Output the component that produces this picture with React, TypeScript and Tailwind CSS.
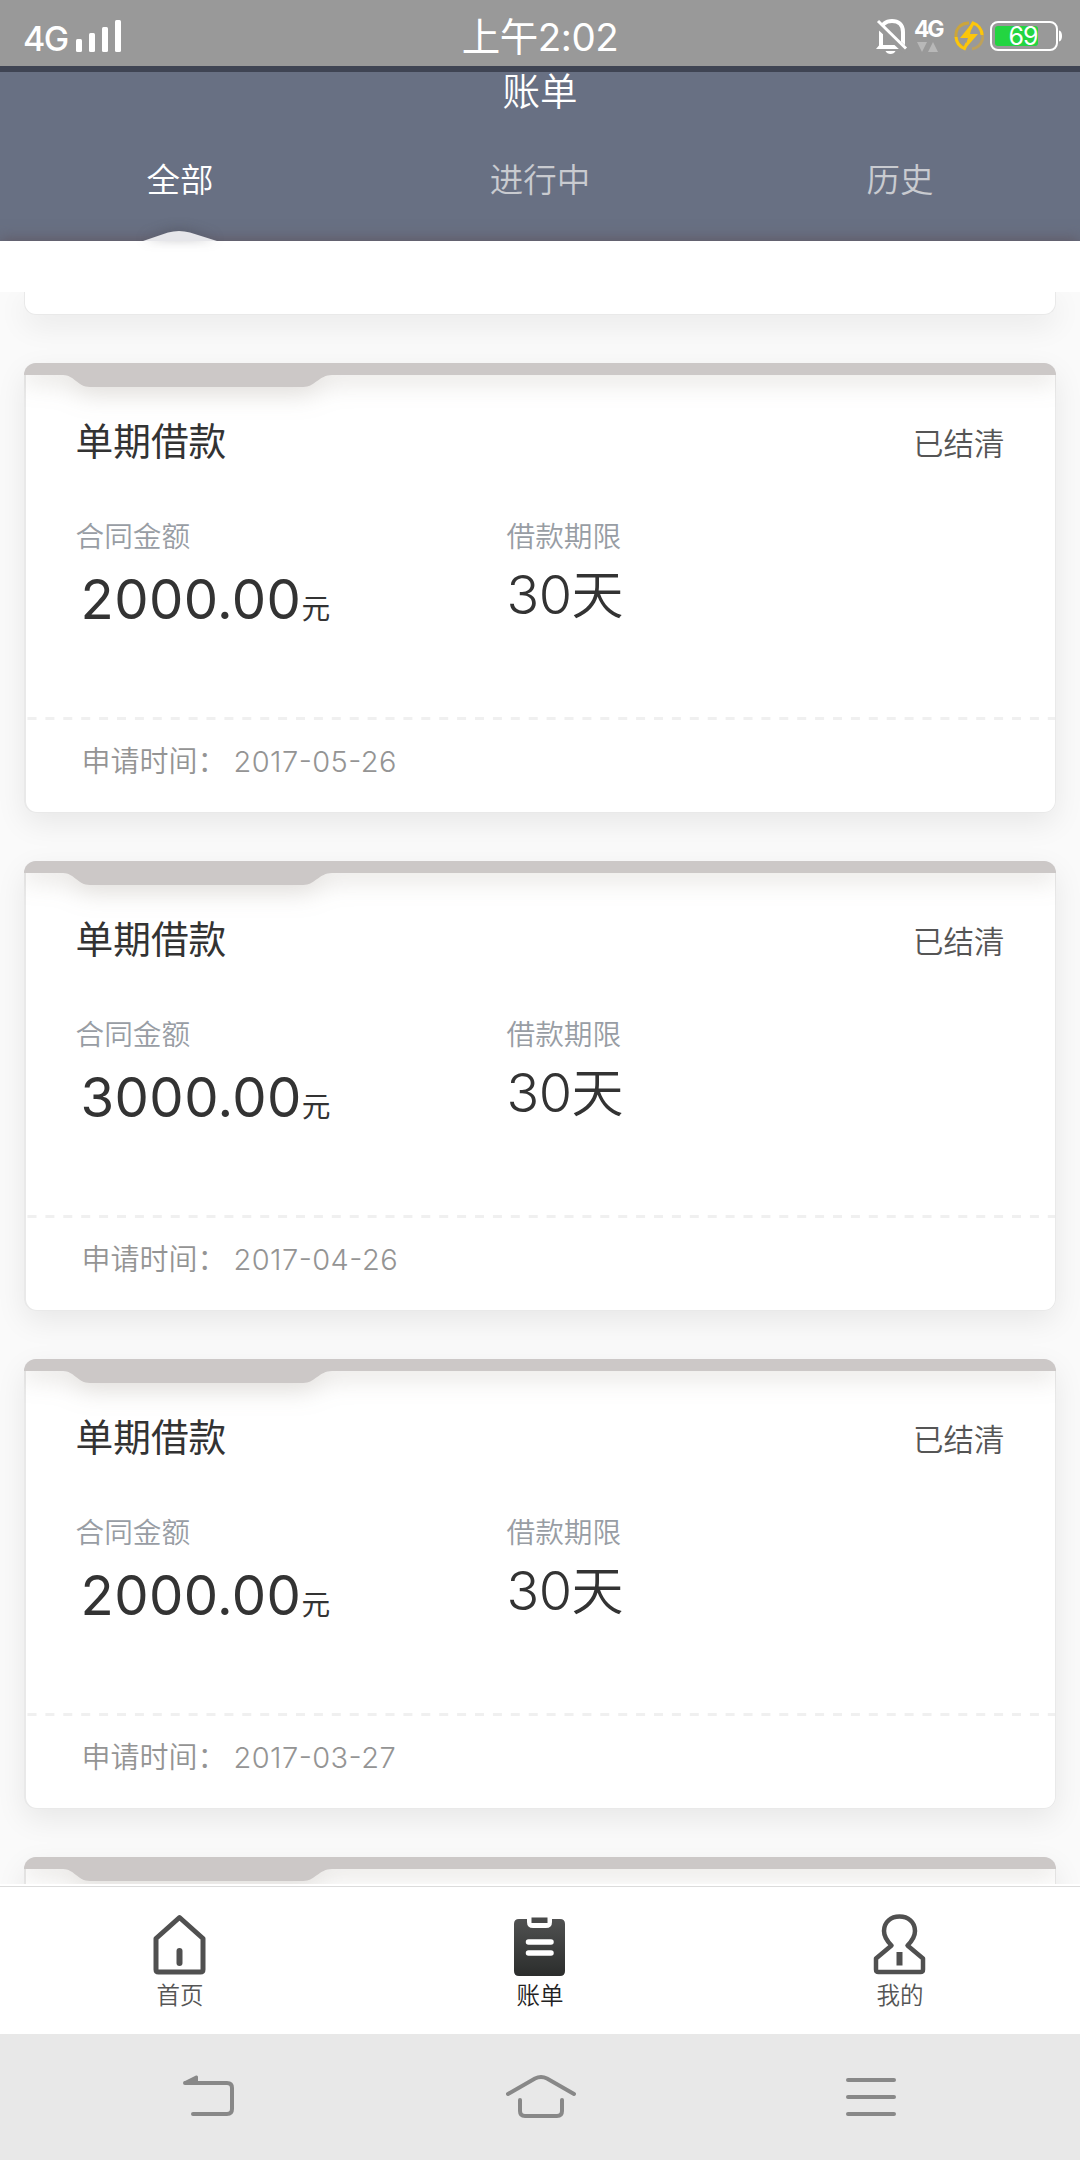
import type { ReactNode } from 'react'

const bills = [
  { id: 1, amount: '2000.00', date: '2017-05-26' },
  { id: 2, amount: '3000.00', date: '2017-04-26' },
  { id: 3, amount: '2000.00', date: '2017-03-27' },
]

function StatusBar() {
  return (
    <div className="flex h-[66px] shrink-0 bg-[#999] text-white">
      <div className="flex w-[360px] items-start pl-[23px]">
        <span className="mt-[19px] text-[34px] leading-[40px] font-medium tracking-[-1.5px]">4G</span>
        <svg className="mt-[19px] ml-[8px]" width="46" height="34" fill="currentColor">
          <rect x="0" y="20" width="6" height="13" rx="1.5" />
          <rect x="13" y="14" width="6" height="19" rx="1.5" />
          <rect x="26" y="8" width="6" height="25" rx="1.5" />
          <rect x="39" y="1" width="6" height="32" rx="1.5" />
        </svg>
      </div>
      <div className="mt-[15px] w-[360px] text-center text-[38.500px] leading-[44px] tracking-[-0.5px]">上午2:02</div>
      <div className="flex w-[360px] items-start pt-[18px] pl-[156px]">
        <svg width="32" height="37" fill="none" stroke="currentColor">
          <path d="M5 31V14C5 6 10 3 16 3S27 6 27 14V31" strokeWidth="4" />
          <path d="M0 31L5 25V27H27L31 31Z" fill="currentColor" stroke="none" />
          <path d="M9.500 33H19.500C18 37 11 37 9.500 33Z" fill="currentColor" stroke="none" />
          <path d="M1 6L30 33" stroke="#999" strokeWidth="7" />
          <path d="M2 3L30 30.500" strokeWidth="3" />
        </svg>
        <div className="ml-[5px] flex w-[30px] flex-col items-center">
          <span className="text-[23px] leading-[22px] font-bold tracking-[-2.5px]">4G</span>
          <svg className="mt-[2px]" width="22" height="11" fill="#b8b8b8">
            <path d="M0 0H10L5 10Z" />
            <path d="M11 10H21L16 0Z" />
          </svg>
        </div>
        <svg className="mt-[3px] ml-[11px]" width="30" height="30" fill="none">
          <path d="M9 26A13 13 0 0 1 6 5C9 2.500 12 2 15 2" stroke="#cba53c" strokeWidth="3" />
          <path d="M18 28A13 13 0 0 0 25 6" stroke="#bda15c" strokeWidth="3" />
          <path d="M2 16A13 13 0 0 0 10.500 27.500L13 22M28 14A13 13 0 0 0 19 2L16 8" stroke="#fcc60b" strokeWidth="3" />
          <path d="M19 1L6 17H14L10 29L24 13H16Z" fill="#fcc60b" />
        </svg>
        <svg className="mt-[3px] ml-[6px]" width="73" height="30" fill="none">
          <rect x="1" y="1" width="66" height="28" rx="7" stroke="#fff" strokeWidth="2" />
          <rect x="5" y="5" width="43" height="20" rx="3" fill="#23d541" />
          <path d="M69 9.500C73 10 73 20 69 20.500Z" fill="#fff" />
          <text x="33" y="24" textAnchor="middle" fontSize="25" fill="#fff" className="tracking-[-1px]">69</text>
        </svg>
      </div>
    </div>
  )
}

function Header() {
  return (
    <header className="flex h-[175px] shrink-0 flex-col border-t-[6px] border-[#3f4453] bg-[#687083] text-white">
      <h1 className="h-[72px] text-center text-[37.500px] leading-[40px] font-[350]">账单</h1>
      <nav className="grid grid-cols-3 text-center text-[33.500px] leading-[72px] font-[350]">
        <span>全部</span>
        <span className="text-[#c9cbd0]">进行中</span>
        <span className="text-[#c9cbd0]">历史</span>
      </nav>
    </header>
  )
}

function Ribbon() {
  return (
    <svg
      className="absolute top-0 left-0 drop-shadow-[0_5px_13px_rgba(110,95,80,0.26)]"
      width="1032"
      height="24"
      fill="#ccc8c7"
    >
      <path d="M0 0H1032V12H308C295 12 291 24 279 24H66C54 24 50 12 39 12H0Z" />
    </svg>
  )
}

function Card({ children }: { children?: ReactNode }) {
  return (
    <div className="shrink-0 rounded-[12px] shadow-[0_10px_30px_rgba(0,0,0,0.08)]">
      <article className="relative h-[450px] overflow-hidden rounded-[12px] bg-[#e9e9e9] p-[1.500px]">
        <div className="flex h-full flex-col rounded-[11px] bg-white">{children}</div>
        <Ribbon />
      </article>
    </div>
  )
}

function BillCard({ amount, date }: { amount: string; date: string }) {
  return (
    <Card>
      <div className="flex justify-between px-[50px] pt-[49px]">
        <h2 className="text-[37.700px] leading-[54px] text-[#333]">单期借款</h2>
        <span className="pt-[5px] text-[30.500px] leading-[50px] font-[350] text-[#555]">已结清</span>
      </div>
      <div className="flex h-[248px] pt-[47px] pl-[50px]">
        <div className="w-[431px]">
          <div className="text-[28.700px] leading-[42px] font-[350] text-[#989da4]">合同金额</div>
          <div className="pt-[9px] pl-[5px] text-[54.500px] leading-[64px] tracking-[0.4px] whitespace-nowrap text-[#333]">
            {amount}
            <span className="text-[28.700px]">元</span>
          </div>
        </div>
        <div>
          <div className="text-[28.700px] leading-[42px] font-[350] text-[#989da4]">借款期限</div>
          <div className="pt-[7px] text-[54px] leading-[60px] tracking-[-0.5px] font-[350] text-[#333]">
            30<span className="text-[52px]">天</span>
          </div>
        </div>
      </div>
      <svg className="shrink-0" width="1029" height="3">
        <path d="M1.500 1.500H1029" stroke="#f0f0f0" strokeWidth="3" strokeDasharray="9 8.900" />
      </svg>
      <div className="flex px-[56px] pt-[20px] text-[29px] leading-[44px] font-[350] text-[#949494]">
        <span className="w-[152px] whitespace-nowrap">申请时间：</span>
        <span className="tracking-[0.45px] [font-feature-settings:'case']">{date}</span>
      </div>
    </Card>
  )
}

function TabItem({ label, active, children }: { label: string; active?: boolean; children: ReactNode }) {
  return (
    <div className="flex flex-col items-center pt-[26px]">
      {children}
      <span className={active ? 'pt-[2px] text-[23.500px] leading-[34px] font-[350] text-[#222]' : 'pt-[2px] text-[23.500px] leading-[34px] font-[350] text-[#555]'}>
        {label}
      </span>
    </div>
  )
}

function TabBar() {
  return (
    <nav className="z-10 grid h-[148px] shrink-0 grid-cols-3 border-t border-[#dcdcdc] bg-white">
      <TabItem label="首页">
        <svg width="54" height="64" fill="none" stroke="#505050" strokeWidth="5" strokeLinejoin="round" strokeLinecap="round">
          <path d="M26.500 4.500L50 25.500V56.500Q50 59 47.500 59H5.500Q3 59 3 56.500V25.500Z" />
          <path d="M26.500 38V50" strokeWidth="6" />
        </svg>
      </TabItem>
      <TabItem label="账单" active>
        <svg width="54" height="64">
          <defs>
            <linearGradient id="board" x1="0" y1="0" x2="0" y2="1">
              <stop offset="0" stopColor="#505151" />
              <stop offset="1" stopColor="#2b2d2c" />
            </linearGradient>
          </defs>
          <path d="M6 6H14V9Q14 15 20 15H33Q39 15 39 9V6H47Q52 6 52 11V58Q52 63 47 63H6Q1 63 1 58V11Q1 6 6 6Z" fill="url(#board)" />
          <rect x="18.500" y="4.500" width="16" height="5.500" fill="#484949" />
          <path d="M15.500 29H38M15.500 40H38" stroke="#fff" strokeWidth="5.500" strokeLinecap="round" />
        </svg>
      </TabItem>
      <TabItem label="我的">
        <svg width="54" height="64" fill="none" stroke="#505050" strokeWidth="4.500" strokeLinejoin="round">
          <path d="M18.500 32.500C13 27 11 22 11 18C11 9 18 3.500 26.500 3.500S42 9 42 18C42 22 40 27 34.500 32.500L50 45.500V56.500Q50 59 47.500 59H5.500Q3 59 3 56.500V45.500Z" />
          <path d="M26.500 39V52.500" strokeWidth="6" />
        </svg>
      </TabItem>
    </nav>
  )
}

function SystemNav() {
  return (
    <div className="flex h-[126px] shrink-0 items-start bg-[#e8e8e8] pt-[40px] pl-[183px] text-[#888]">
      <svg width="52" height="44" fill="none" stroke="currentColor" strokeWidth="4" strokeLinecap="round">
        <path d="M2 9H44Q49 9 49 14V35Q49 40 44 40H10" />
        <path d="M1 7.500L13 1.500Q15 1 15 3V9H2Z" fill="currentColor" stroke="none" />
      </svg>
      <svg className="ml-[271px]" width="71" height="46" fill="none" stroke="currentColor" strokeWidth="4" strokeLinecap="round">
        <path d="M2 20L29 4.500Q35 1.500 41 4.500L68 20" />
        <path d="M14 26V37Q14 42 19 42H51Q56 42 56 37V26" />
      </svg>
      <svg className="ml-[269px]" width="51" height="44" stroke="currentColor" strokeWidth="4" strokeLinecap="round">
        <path d="M2 6H48M2 23H48M2 40H48" />
      </svg>
    </div>
  )
}

export default function App() {
  return (
    <div className="flex h-[2160px] w-[1080px] flex-col overflow-hidden bg-white font-['Inter','Noto_Sans_CJK_SC',sans-serif]">
      <StatusBar />
      <Header />
      <div className="relative h-[51px] shrink-0 bg-white shadow-[0_-1px_14px_rgba(90,70,75,0.6)] [clip-path:inset(-30px_0_0_0)]">
        <svg className="absolute -top-[10px] left-[143px] drop-shadow-[0_-2px_6px_rgba(60,60,70,0.35)]" width="74" height="10" fill="#e6e6ea">
          <path d="M0 10L25 1.500Q36 -1.500 47 1.500L74 10Z" />
        </svg>
      </div>
      <main className="h-[1592px] shrink-0 overflow-hidden bg-[#fafafa] px-[24px]">
        <div className="mb-[48px] h-[23px] rounded-b-[12px] border border-t-0 border-[#e9e9e9] bg-white shadow-[0_10px_30px_rgba(0,0,0,0.08)]" />
        <div className="flex flex-col gap-[48px]">
          {bills.map((bill) => (
            <BillCard key={bill.id} amount={bill.amount} date={bill.date} />
          ))}
          <Card />
        </div>
      </main>
      <div className="h-[2px] shrink-0 bg-white" />
      <TabBar />
      <SystemNav />
    </div>
  )
}
